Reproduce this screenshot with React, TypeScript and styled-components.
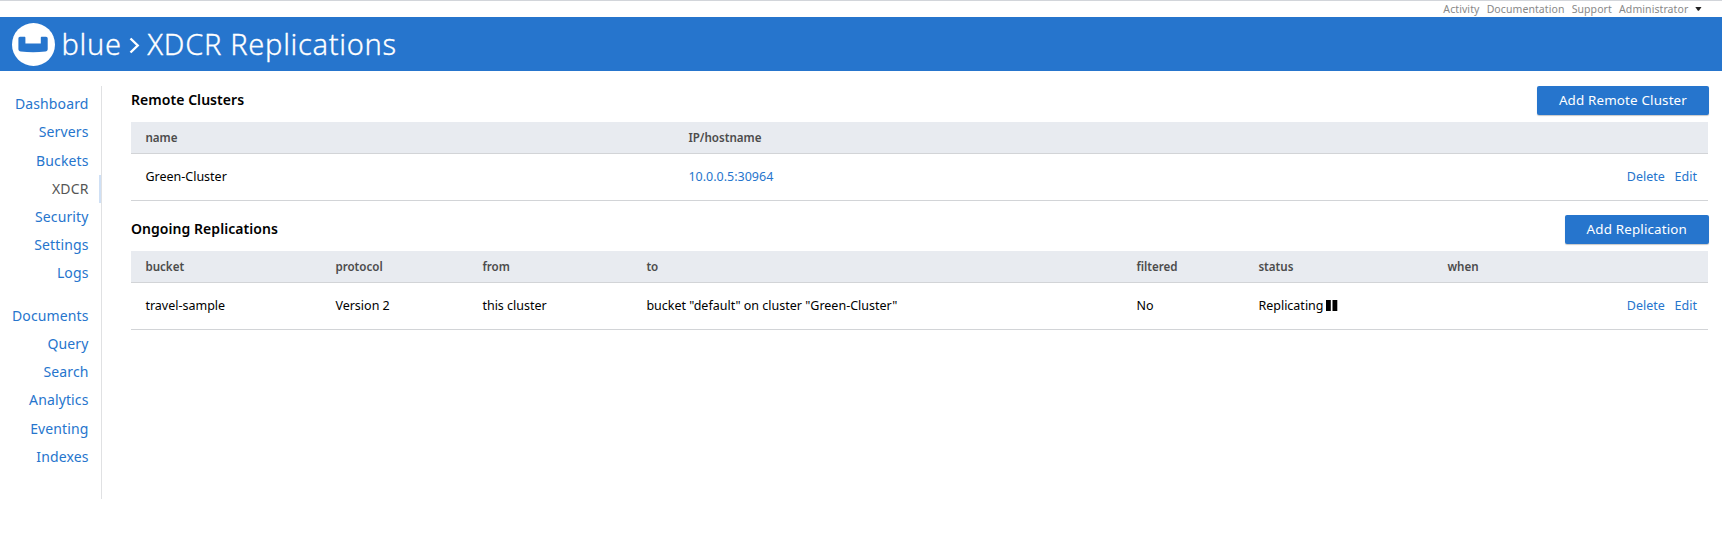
import React from 'react';
import styled, { createGlobalStyle, css } from 'styled-components';

const blue = '#2675cd';

const GlobalStyle = createGlobalStyle`
  * { box-sizing: border-box; }
  body {
    margin: 0;
    background: #fff;
    color: #000;
    font-family: 'Noto Sans', 'Open Sans', sans-serif;
    font-size: 14px;
  }
  a { color: ${blue}; text-decoration: none; }
`;

const Page = styled.div`
  border-top: 1px solid #d2d5da;
`;

const UtilityBar = styled.nav`
  display: flex;
  justify-content: flex-end;
  align-items: center;
  gap: 7.2px;
  height: 16px;
  padding-right: 20px;
  font-size: 10.5px;
  letter-spacing: 0.08px;
  line-height: 16px;
`;

const UtilityLink = styled.a`
  color: #888;
`;

const Caret = styled.svg`
  display: block;
  margin: -1px 0 0 -0.5px;
`;

const Header = styled.header`
  display: flex;
  align-items: center;
  height: 54px;
  padding-left: 11.5px;
  background: ${blue};
  color: #fff;
`;

const Logo = styled.svg`
  display: block;
  flex: none;
  margin-right: 7px;
`;

const Title = styled.h1`
  display: flex;
  align-items: center;
  margin: 0;
  font-size: 29px;
  font-weight: 300;
  -webkit-text-stroke: 0.3px #fff;
  letter-spacing: 0.7px;
  line-height: 54px;
  white-space: nowrap;
`;

const Chevron = styled.svg`
  display: block;
  margin: 2px 7px 0 7.5px;
`;

const Body = styled.div`
  display: flex;
  align-items: flex-start;
  padding: 15px 14px 0 0;
`;

const Sidebar = styled.nav`
  flex: none;
  width: 102px;
  height: 413px;
  padding-top: 4.3px;
  border-right: 1px solid #e0e1e3;
`;

const NavGroup = styled.div`
  display: flex;
  flex-direction: column;
  margin-bottom: 14.9px;
`;

const NavItem = styled.a<{ $active?: boolean }>`
  height: 28.125px;
  padding-right: 12.5px;
  font-size: 14px;
  letter-spacing: 0.12px;
  line-height: 28px;
  text-align: right;
  ${(p) => p.$active && css`
    color: #555;
    border-right: 2px solid #cfe0f5;
    padding-right: 10.5px;
  `}
`;

const Main = styled.main`
  flex: 1;
  min-width: 0;
  padding-left: 29px;
`;

const Section = styled.section`
  margin-bottom: 14px;
`;

const SectionHead = styled.div`
  display: flex;
  justify-content: space-between;
  align-items: flex-start;
  height: 36px;
  margin-right: -1px;
`;

const SectionTitle = styled.h2`
  margin: 0;
  font-size: 14px;
  font-weight: 600;
  letter-spacing: 0.05px;
  line-height: 28px;
`;

const Button = styled.button`
  height: 29px;
  padding: 0 22px 1px;
  border: 0;
  border-radius: 2px;
  background: ${blue};
  box-shadow: 0 1px 1px rgba(0, 0, 0, 0.22);
  color: #fff;
  font: inherit;
  font-size: 13.4px;
  letter-spacing: 0.15px;
  line-height: 27px;
`;

const Row = styled.div<{ $columns: string; $head?: boolean }>`
  display: grid;
  grid-template-columns: ${(p) => p.$columns};
  align-items: center;
  height: 47px;
  padding: 0 11px 1px 14.4px;
  border-bottom: 1px solid #d2d4d7;
  font-size: 12.5px;
  white-space: nowrap;
  ${(p) => p.$head && css`
    height: 32px;
    background: #e8ebf0;
    color: #4c4c4c;
    font-size: 11.6px;
    font-weight: 600;
  `}
`;

const Actions = styled.div`
  display: flex;
  justify-content: flex-end;
  gap: 9.8px;
`;

const PauseIcon = styled.svg`
  margin-left: 2px;
  vertical-align: -1px;
`;

const clusterColumns = '543px 1fr 120px';
const replicationColumns = '190px 147px 164px 490px 122px 189px 1fr 120px';

const primaryNav = ['Dashboard', 'Servers', 'Buckets', 'XDCR', 'Security', 'Settings', 'Logs'];
const dataNav = ['Documents', 'Query', 'Search', 'Analytics', 'Eventing', 'Indexes'];

function RowActions() {
  return (
    <Actions>
      <a href="#delete">Delete</a>
      <a href="#edit">Edit</a>
    </Actions>
  );
}

export default function App() {
  return (
    <Page>
      <GlobalStyle />
      <UtilityBar>
        <UtilityLink href="#activity">Activity</UtilityLink>
        <UtilityLink href="#docs">Documentation</UtilityLink>
        <UtilityLink href="#support">Support</UtilityLink>
        <UtilityLink href="#admin">Administrator</UtilityLink>
        <Caret width="7" height="4" viewBox="0 0 7 4">
          <path d="M0.300 0h6.200L3.900 3.700h-1z" fill="#222" />
        </Caret>
      </UtilityBar>
      <Header>
        <Logo width="43" height="43" viewBox="0 0 43 43">
          <circle cx="21.5" cy="21.5" r="21.5" fill="#fff" />
          <path
            d="M8 13.8h4.400c.6 0 1 .4 1 1v5.800h15.400v-5.800c0-.6.4-1 1-1H34c1 0 1.700.7 1.700 1.700v10.400c0 1.500-.8 2.400-2.300 2.600-8 .9-16.600.9-24.600 0-1.500-.2-2.400-1.100-2.400-2.600V15.500c0-1 .7-1.700 1.600-1.700z"
            fill={blue}
          />
        </Logo>
        <Title>
          <span>blue</span>
          <Chevron width="11" height="17" viewBox="0 0 11 17">
            <path d="M1.500 1.500L8.700 8.500L1.500 15.500" fill="none" stroke="#fff" strokeWidth="2.400" />
          </Chevron>
          <span>XDCR Replications</span>
        </Title>
      </Header>
      <Body>
        <Sidebar>
          <NavGroup>
            {primaryNav.map((label) => (
              <NavItem key={label} href={`#${label}`} $active={label === 'XDCR'}>{label}</NavItem>
            ))}
          </NavGroup>
          <NavGroup>
            {dataNav.map((label) => (
              <NavItem key={label} href={`#${label}`}>{label}</NavItem>
            ))}
          </NavGroup>
        </Sidebar>
        <Main>
          <Section>
            <SectionHead>
              <SectionTitle>Remote Clusters</SectionTitle>
              <Button>Add Remote Cluster</Button>
            </SectionHead>
            <Row $columns={clusterColumns} $head>
              <span>name</span>
              <span>IP/hostname</span>
            </Row>
            <Row $columns={clusterColumns}>
              <span>Green-Cluster</span>
              <a href="#host">10.0.0.5:30964</a>
              <RowActions />
            </Row>
          </Section>
          <Section>
            <SectionHead>
              <SectionTitle>Ongoing Replications</SectionTitle>
              <Button>Add Replication</Button>
            </SectionHead>
            <Row $columns={replicationColumns} $head>
              <span>bucket</span>
              <span>protocol</span>
              <span>from</span>
              <span>to</span>
              <span>filtered</span>
              <span>status</span>
              <span>when</span>
            </Row>
            <Row $columns={replicationColumns}>
              <span>travel-sample</span>
              <span>Version 2</span>
              <span>this cluster</span>
              <span>bucket "default" on cluster "Green-Cluster"</span>
              <span>No</span>
              <span>
                Replicating
                <PauseIcon width="12" height="11" viewBox="0 0 12 11">
                  <path d="M0 0h4.800v11H0zM6.500 0h4.800v11H6.500z" fill="#000" />
                </PauseIcon>
              </span>
              <span />
              <RowActions />
            </Row>
          </Section>
        </Main>
      </Body>
    </Page>
  );
}
